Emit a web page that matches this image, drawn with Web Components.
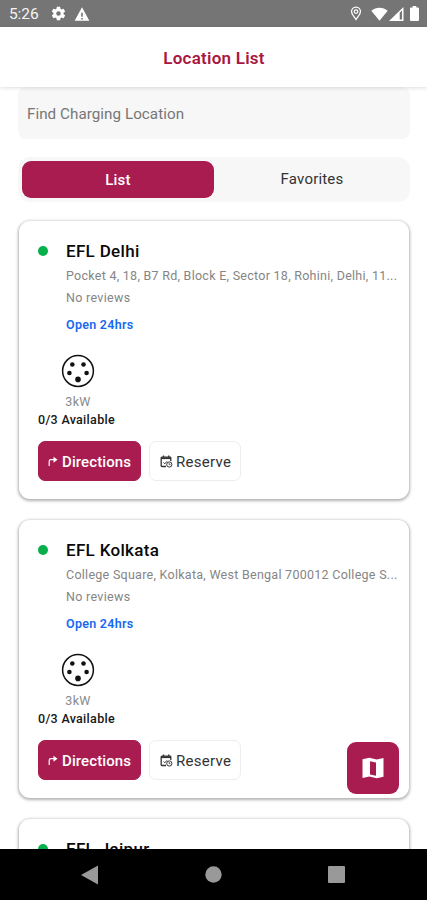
<!DOCTYPE html>
<html lang="en"><head><meta charset="utf-8"><title>Location List</title>
<style>
html,body{margin:0;height:100%;overflow:hidden;background:#fff}
body{font-family:Roboto,"Liberation Sans",sans-serif;color:#111}
</style></head><body>
<location-screen></location-screen>
<script>
const define=(name,html,setup)=>customElements.define(name,class extends HTMLElement{
  connectedCallback(){
    if(this.shadowRoot)return;
    const t=document.createElement('template');t.innerHTML=html;
    this.attachShadow({mode:'open'}).append(t.content.cloneNode(true));
    if(setup)setup(this,this.shadowRoot);
  }
});

define('status-bar',`<style>
:host{display:flex;align-items:center;height:26.5px;box-sizing:border-box;padding:1px 8px 0 9px;background:#757575;color:#fff}
time{font-size:15.5px;letter-spacing:-.1px;width:41px;line-height:26px;color:#f4f4f4}
svg{display:block;fill:currentColor;flex:none}
.gear{margin-right:7px}.gap{flex:1}
</style><time>5:26</time>
<svg class="gear" width="17" height="17" viewBox="0 0 24 24"><path d="M19.1 12.9a7 7 0 0 0 0-1.8l2-1.6a.5.5 0 0 0 .2-.6l-2-3.4a.5.5 0 0 0-.6-.2l-2.3 1a7 7 0 0 0-1.7-1l-.3-2.500a.5.5 0 0 0-.5-.4h-3.800a.5.5 0 0 0-.5.4l-.4 2.500a7 7 0 0 0-1.600 1l-2.400-1a.5.5 0 0 0-.6.2l-1.900 3.400a.5.5 0 0 0 .1.6l2 1.600a7 7 0 0 0 0 1.800l-2 1.600a.5.5 0 0 0-.1.600l1.900 3.400c.1.2.4.3.6.2l2.400-1a7 7 0 0 0 1.600 1l.4 2.500c0 .2.2.4.5.4h3.800c.3 0 .5-.2.5-.4l.3-2.500a7 7 0 0 0 1.700-1l2.300 1c.2.1.5 0 .6-.2l2-3.400a.5.5 0 0 0-.2-.6zM12 15.200a3.200 3.200 0 1 1 0-6.400 3.200 3.200 0 0 1 0 6.400z"/></svg>
<svg width="16" height="16" viewBox="0 0 24 24"><path fill-rule="evenodd" d="M1 22h22L12 2zM10.800 18h2.400v2.200h-2.400zm0-8h2.400v6h-2.400z"/></svg>
<span class="gap"></span>
<svg width="12" height="15" viewBox="0 0 12 15" style="margin-right:9px"><path d="M6 13.500C4.500 11 1.500 8.500 1.500 5.600a4.500 4.500 0 0 1 9 0C10.500 8.500 7.500 11 6 13.500z" fill="none" stroke="currentColor" stroke-width="1.300"/><circle cx="6" cy="5.600" r="1.800" fill="none" stroke="currentColor" stroke-width="1.200"/></svg>
<svg width="17" height="14" viewBox="0 0 17 14"><path d="M.3 3.700C5-.3 12-.3 16.700 3.700L8.500 13.700z"/></svg>
<svg width="15" height="14" viewBox="0 0 15 14" style="margin:1px 6px 0 1px"><path fill-rule="evenodd" d="M0 14L14.500 0v14zM10.700 5.700v6.800h2.300V3.600z"/></svg>
<svg width="9" height="15" viewBox="0 0 9 15"><path d="M0 2.500Q0 1.500 1 1.500H2.700V0h3.600v1.500H8q1 0 1 1V14q0 1-1 1H1q-1 0-1-1z"/></svg>`);

define('app-header',`<style>
:host{display:flex;align-items:center;justify-content:center;height:60px;padding:3px 0 0 1px;box-sizing:border-box;background:#fff;box-shadow:0 1px 4px #0002;position:relative;z-index:2;color:#a9163f;font-weight:600;font-size:17px;letter-spacing:.25px}
</style><slot></slot>`);

define('search-field',`<style>
:host{display:flex;align-items:center;height:52px;box-sizing:border-box;padding:3px 9px 0;background:#f7f7f7;border-radius:8px;color:#767676;font-size:15.200px;letter-spacing:.05px}
</style><slot></slot>`);

define('view-tabs',`<style>
:host{display:grid;grid-template-columns:192px 1fr;height:45px;box-sizing:border-box;padding:4px 0 4px 4px;background:#f7f7f7;border-radius:12px;font-size:15px}
div{display:flex;align-items:center;justify-content:center;line-height:37px;letter-spacing:.2px;color:#333}
.on{background:#a91c50;border-radius:9px;color:#fff;font-weight:500;padding-top:2px;box-sizing:border-box;height:37px}
</style><div class="on"><slot name="active"></slot></div><div><slot></slot></div>`);

define('socket-icon',`<style>:host{display:block;width:34px;height:34px}svg{display:block}</style>
<svg width="34" height="34" viewBox="0 0 34 34"><circle cx="17" cy="17" r="15.400" fill="#fff" stroke="#111" stroke-width="1.500"/><g fill="#111"><circle cx="11.300" cy="10.500" r="2.300"/><circle cx="22.500" cy="10.500" r="2.300"/><circle cx="8.400" cy="19" r="2.300"/><circle cx="25.600" cy="19" r="2.300"/><circle cx="17" cy="25.400" r="2.800"/></g></svg>`);

define('action-button',`<style>
:host{display:flex;align-items:center;height:40px;box-sizing:border-box;border-radius:7px;font-size:15px;border:1px solid #ededed;color:#333;background:#fff;padding:2px 0 0 10px;width:92px;letter-spacing:.3px;white-space:nowrap}
:host([primary]){width:103px;background:#a91c50;border-color:#a91c50;color:#fff;font-weight:500;padding-left:9px;letter-spacing:.1px}
svg{display:none;flex:none}
:host([primary]) .turn,:host(:not([primary])) .cal{display:block}
.turn{margin-right:4px}.cal{margin:-1px 3px 0 0}
</style>
<svg class="turn" width="10" height="12" viewBox="0 0 10 12"><path d="M1.200 10V5.300Q1.200 3.700 3 3.700H6" fill="none" stroke="currentColor" stroke-width="1.200"/><path d="M5.500.7L9.500 3.700 5.500 6.700z" fill="currentColor"/></svg>
<svg class="cal" width="13" height="13" viewBox="0 0 13 13" fill="none" stroke="currentColor"><path d="M6 11.500H2q-.8 0-.8-.8V3q0-.8.8-.8h8q.8 0 .8.800V6M3.500.5v2M8.700.5v2" stroke-width="1.300"/><path d="M1 3.200h10" stroke-width="1.800"/><path d="M3.500 7.500l1.300 1.300 2.200-2.500" stroke-width="1"/><circle cx="9.300" cy="9.500" r="2.600"/><path d="M9.200 8v1.700h1.300" stroke-width=".8"/></svg>
<slot></slot>`);

define('station-card',`<style>
:host{display:block;box-sizing:border-box;height:278px;flex:none;padding:18px 10px 0 19px;background:#fff;border-radius:11px;box-shadow:0 1px 3px 1px #0000004d}
.info{display:grid;grid-template-columns:10px 1fr;column-gap:18px}
i{width:10px;height:10px;border-radius:50%;background:#08b04c;align-self:center}
h2{margin:0;font-size:17px;font-weight:500;line-height:25px;letter-spacing:.32px;color:#090909}
.lines{grid-column:2;min-width:0;font-size:12.500px;color:#858585}
p{margin:0;white-space:nowrap}
.addr{line-height:24px;letter-spacing:.27px}
.rev{line-height:19px;letter-spacing:.3px}
.open{margin-top:7px;line-height:21px;font-weight:600;color:#1769f0;font-size:12.500px;letter-spacing:.27px}
.plug{display:flex;flex-direction:column;align-items:center;width:80px;margin-top:19px;line-height:18px;font-size:12.500px;color:#8a8a8a}
.plug span{margin-top:5px;letter-spacing:.3px}
.avail{line-height:18px;font-size:12.500px;font-weight:500;color:#171717;letter-spacing:.3px}
.actions{display:flex;gap:8px;margin-top:12px}
</style>
<div class="info"><i></i><h2></h2></div>`,
(el,r)=>{
  r.querySelector('h2').textContent=el.getAttribute('name');
  if(!el.hasAttribute('address'))return;
  const t=document.createElement('template');
  t.innerHTML=`<div class="lines"><p class="addr"></p><p class="rev">No reviews</p><p class="open">Open 24hrs</p></div>`;
  r.querySelector('.info').append(t.content.cloneNode(true));
  r.querySelector('.addr').textContent=el.getAttribute('address');
  t.innerHTML=`<div class="plug"><socket-icon></socket-icon><span>3kW</span></div>
<p class="avail">0/3 Available</p>
<div class="actions"><action-button primary>Directions</action-button><action-button>Reserve</action-button></div>`;
  r.append(t.content.cloneNode(true));
});

define('map-button',`<style>
:host{position:absolute;right:28px;bottom:106px;display:grid;place-items:center;width:52px;height:52px;border-radius:9px;background:#a91c50;z-index:1}
</style><svg width="22" height="22" viewBox="0 0 22 22"><path fill="#fff" fill-rule="evenodd" d="M.5 2.200L7.300.7l7.400 1.800 6.800-1.500v18.800l-6.800 1.500-7.400-1.800L.5 21zM8 4.200v13.300l6 1.300V5.500z"/></svg>`);

define('nav-bar',`<style>
:host{display:flex;align-items:center;justify-content:space-between;height:51px;box-sizing:border-box;padding:0 82px 0 81px;background:#000}
svg{display:block;fill:#999}
</style><svg width="17" height="20" viewBox="0 0 17 20"><path d="M0 10L17 .5v19z"/></svg><svg width="17" height="17" viewBox="0 0 17 17"><circle cx="8.500" cy="8.500" r="8.200"/></svg><svg width="17" height="17" viewBox="0 0 17 17"><rect width="17" height="17" rx="1"/></svg>`);

define('location-screen',`<style>
:host{display:flex;flex-direction:column;position:relative;width:427px;height:900px;overflow:hidden;background:#fff}
main{flex:1;min-height:0;overflow:hidden;display:flex;flex-direction:column;padding:0 17px 0 18px}
search-field,view-tabs{flex:none}
view-tabs{margin-top:18px}
.list{display:flex;flex-direction:column;gap:21px;margin:19px 1px 0}
</style>
<status-bar></status-bar><app-header>Location List</app-header>
<main><search-field>Find Charging Location</search-field>
<view-tabs><span slot="active">List</span>Favorites</view-tabs>
<div class="list">
<station-card name="EFL Delhi" address="Pocket 4, 18, B7 Rd, Block E, Sector 18, Rohini, Delhi, 11..."></station-card>
<station-card name="EFL Kolkata" address="College Square, Kolkata, West Bengal 700012 College S..."></station-card>
<station-card name="EFL Jaipur"></station-card>
</div></main><map-button></map-button><nav-bar></nav-bar>`);
</script></body></html>
